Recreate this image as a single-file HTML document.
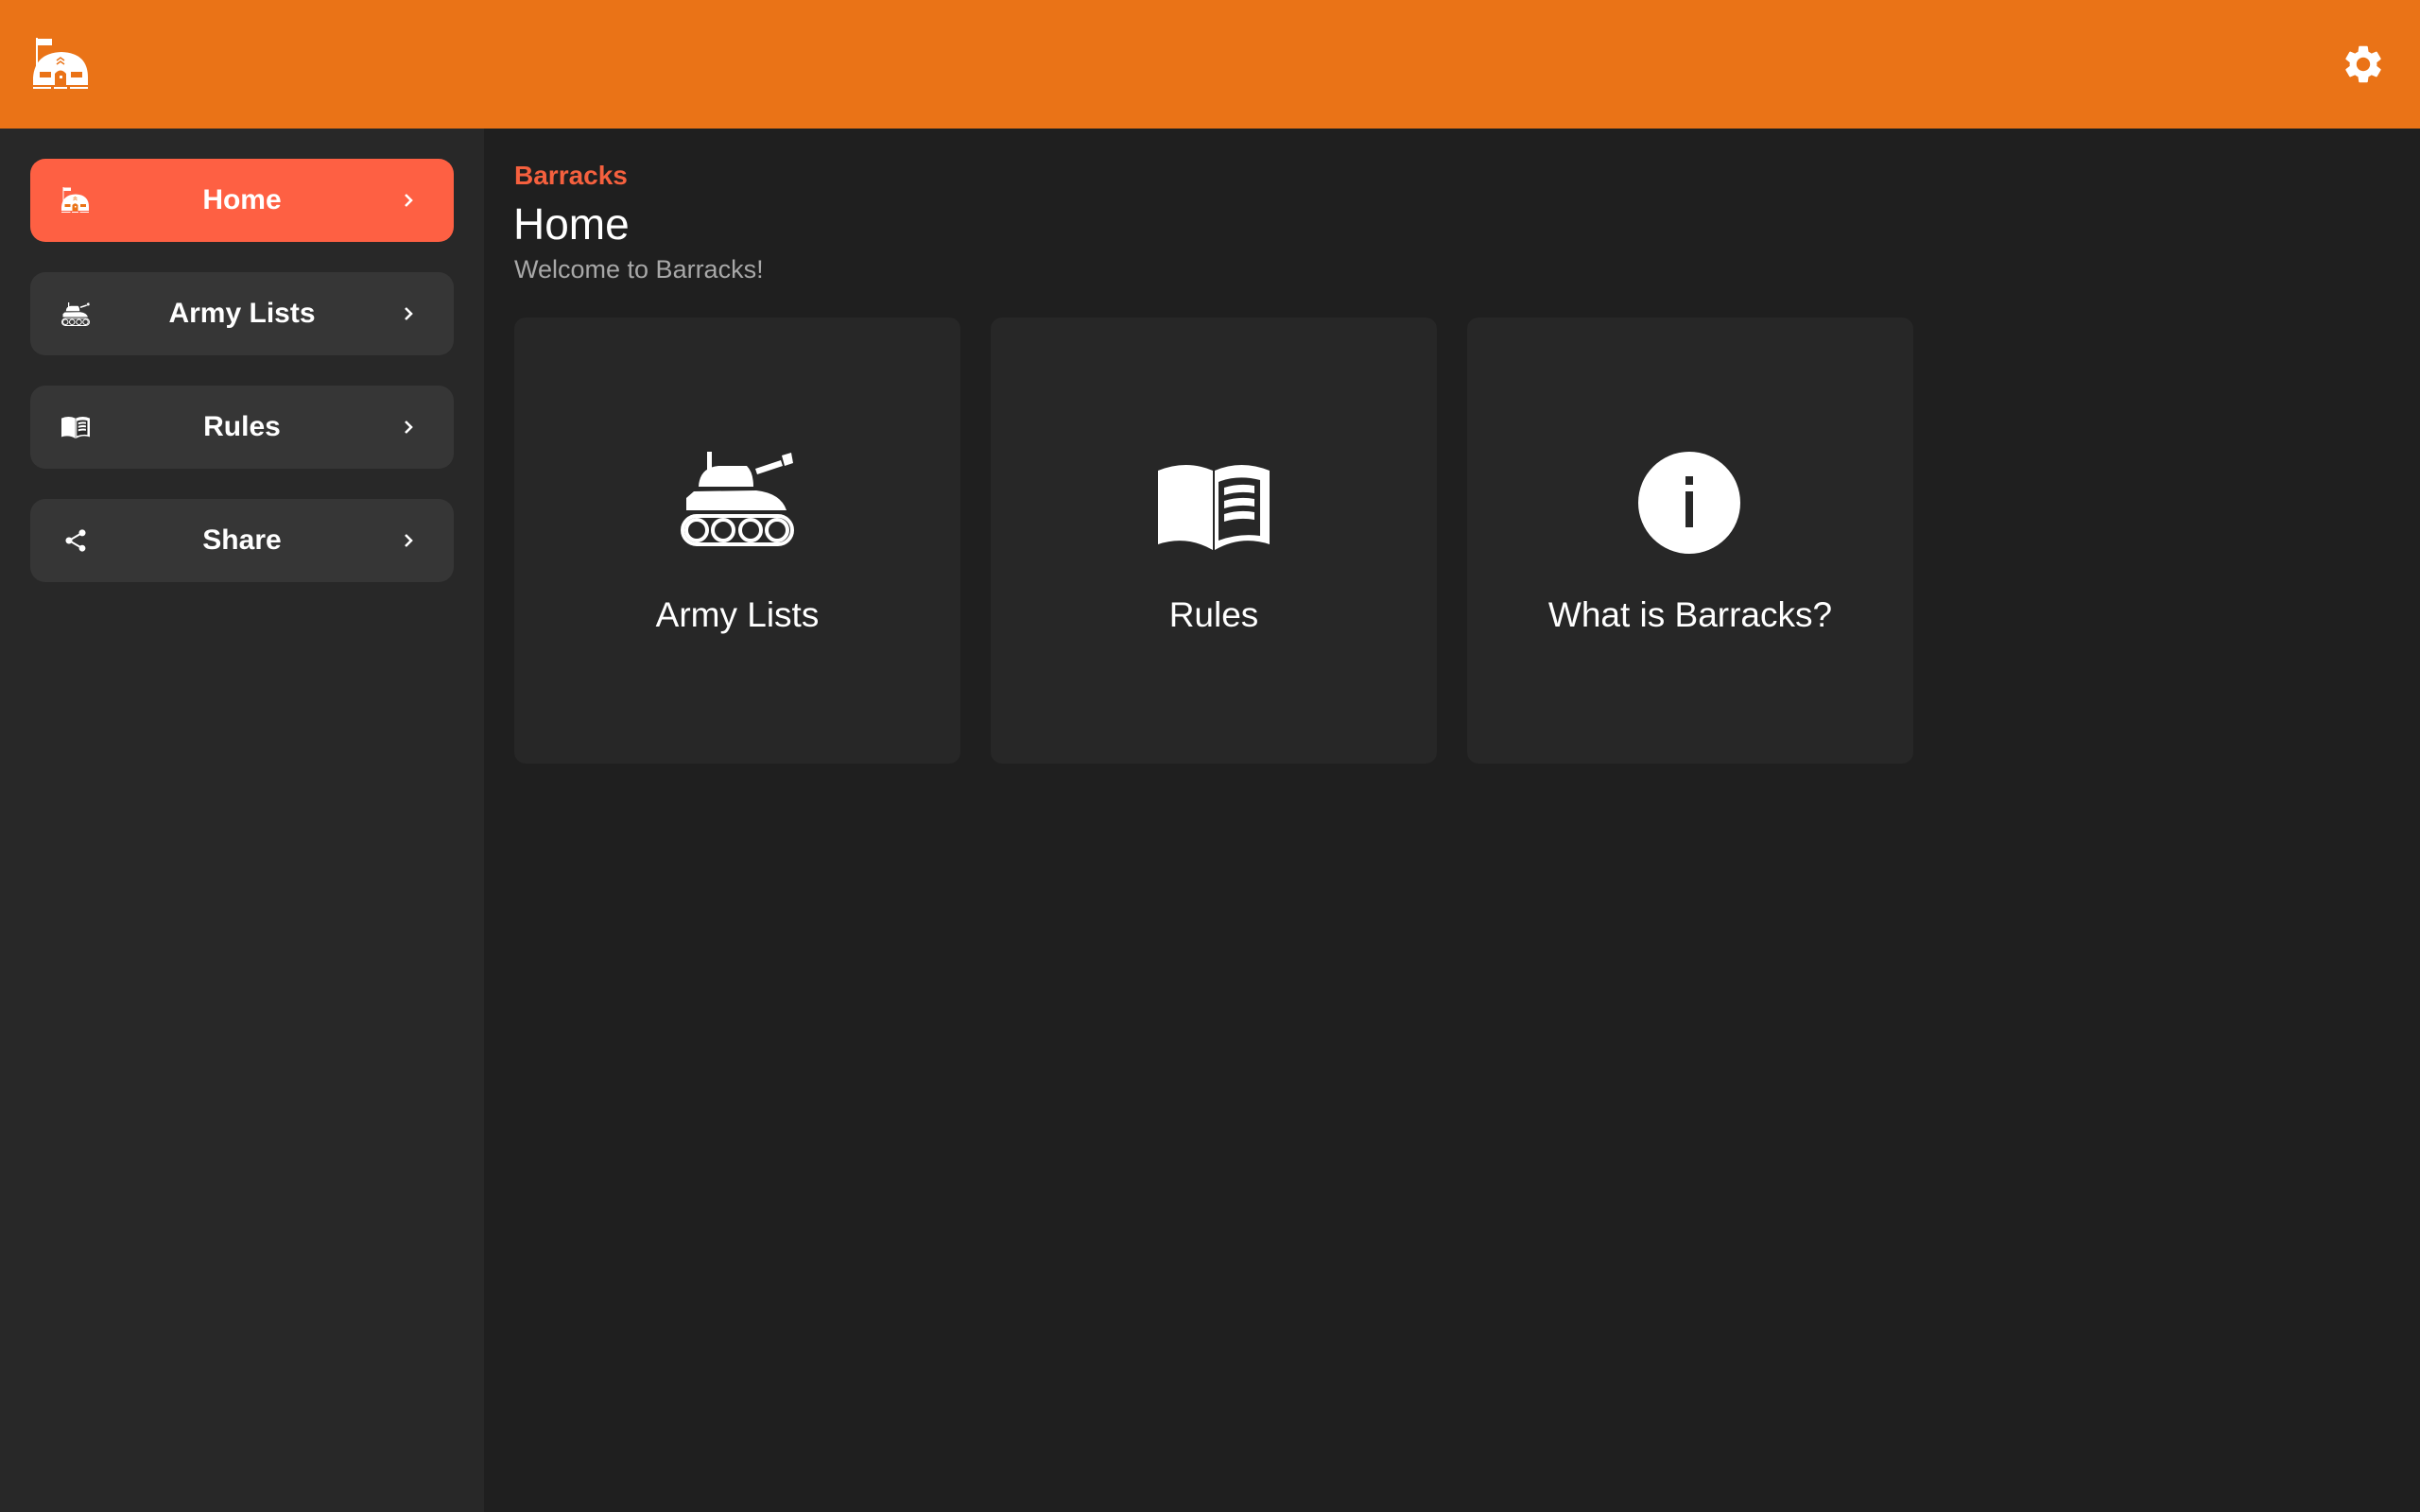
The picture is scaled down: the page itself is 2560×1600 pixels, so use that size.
<!DOCTYPE html>
<html><head><meta charset="utf-8"><style>
*{margin:0;padding:0;box-sizing:border-box}
body{width:2560px;height:1600px;background:#1f1f1f;font-family:"Liberation Sans",sans-serif;position:relative;overflow:hidden;color:#fff}
.hdr{position:absolute;left:0;top:0;width:2560px;height:136px;background:#ea7317}
.side{position:absolute;left:0;top:136px;width:512px;height:1464px;background:#282828}
.btn{position:absolute;left:32px;width:448px;height:88px;border-radius:16px;background:#363636}
.btn.act{background:#fe6043}
.btn .t{position:absolute;left:0;right:0;top:0;line-height:88px;text-align:center;font-weight:bold;font-size:30px}
.btn .ic{position:absolute}
.btn .ch{position:absolute;left:392px;top:35px;width:16px;height:18px}
.card{position:absolute;top:336px;width:472px;height:472px;background:#272727;border-radius:12px}
.lab{position:absolute;top:628px;text-align:center;font-size:37px;width:472px}
</style></head><body>
<svg width="0" height="0" style="position:absolute">
<defs>
<symbol id="tank" viewBox="0 0 120 100">
<rect x="28" y="0" width="5" height="20" fill="#fff"/>
<path d="M19 37 Q20 17 40 15 L70 15 Q77 22 77 37 Z" fill="#fff"/>
<path d="M79 18 L106 9 L108 15 L81 24 Z" fill="#fff"/>
<path d="M107 4 L117 1 L119 12 L110 15 Z" fill="#fff"/>
<path d="M6 49 L14 42 L80 41 Q106 44 112 62 L6 62 Z" fill="#fff"/>
<rect x="2" y="68" width="116" height="30" rx="15" fill="none" stroke="#fff" stroke-width="4"/>
<circle cx="17" cy="83" r="11" fill="none" stroke="#fff" stroke-width="4"/>
<circle cx="45" cy="83" r="11" fill="none" stroke="#fff" stroke-width="4"/>
<circle cx="74" cy="83" r="11" fill="none" stroke="#fff" stroke-width="4"/>
<circle cx="102" cy="83" r="11" fill="none" stroke="#fff" stroke-width="4"/>
</symbol>
<symbol id="book" viewBox="0 0 118 90">
<path d="M0 6 Q30 -6 58 6 L58 90 Q30 74 0 84 Z" fill="#fff"/>
<path d="M60 6 Q88 -6 118 6 L118 84 Q88 74 60 90 Z" fill="#fff"/>
<path d="M64 80 L64 18 Q84 10 108 16 L108 75 Q86 72 64 80 Z" fill="#272727"/>
<path d="M70 24 Q86 19 102 22 L102 30 Q86 27 70 32 Z M70 38 Q86 33 102 36 L102 44 Q86 41 70 46 Z M70 52 Q86 47 102 50 L102 58 Q86 55 70 60 Z" fill="#fff"/>
</symbol>
<symbol id="dome" viewBox="0 0 60 56">
<rect x="3" y="0" width="2" height="30" fill="#fff"/>
<path d="M5 1 L20 1 L20 8 L5 8 Z" fill="#fff"/>
<path d="M0 50 L0 42 Q2 16 30 15 Q58 16 58 42 L58 50 Z" fill="#fff"/>
<rect x="7" y="36" width="12" height="6" fill="#ea7317"/>
<rect x="40" y="36" width="12" height="6" fill="#ea7317"/>
<path d="M23 50 L23 38 Q29 31 35 38 L35 50 Z" fill="#ea7317"/>
<rect x="28" y="40" width="3" height="3" fill="#fff"/>
<path d="M25 24 L29 21 L33 24 M25 28 L29 25 L33 28" stroke="#ea7317" stroke-width="1.5" fill="none"/>
<rect x="0" y="52" width="19" height="2" fill="#fff"/><rect x="22" y="52" width="14" height="2" fill="#fff"/><rect x="39" y="52" width="19" height="2" fill="#fff"/>
</symbol>
<symbol id="chev" viewBox="0 0 16 18"><path d="M5 3 L11 9 L5 15" stroke="#fff" stroke-width="2.6" fill="none"/></symbol>
</defs></svg>

<div class="hdr">
<svg style="position:absolute;left:35px;top:40px" width="60" height="56"><use href="#dome"/></svg>
<svg style="position:absolute;left:2476px;top:44px" width="48" height="48" viewBox="0 0 24 24"><path fill="#fff" d="M19.14 12.94c.04-.3.06-.61.06-.94 0-.32-.02-.64-.07-.94l2.030-1.58a.49.49 0 0 0 .12-.61l-1.92-3.32a.488.488 0 0 0-.59-.22l-2.39.96c-.5-.38-1.03-.7-1.62-.94l-.36-2.54a.484.484 0 0 0-.48-.41h-3.84c-.24 0-.43.17-.47.41l-.36 2.54c-.59.24-1.13.57-1.62.94l-2.39-.96c-.22-.08-.47 0-.59.22L2.74 8.87c-.12.21-.08.47.12.61l2.03 1.58c-.05.3-.09.63-.09.94s.02.64.07.94l-2.03 1.58a.49.49 0 0 0-.12.61l1.92 3.32c.12.22.37.29.59.22l2.390-.96c.5.38 1.03.7 1.62.94l.36 2.54c.05.24.24.41.48.41h3.84c.24 0 .44-.17.47-.41l.36-2.54c.59-.24 1.13-.56 1.62-.94l2.39.96c.22.08.47 0 .59-.22l1.92-3.32c.12-.22.07-.47-.12-.61l-2.01-1.58zM12 15.6c-1.98 0-3.6-1.620-3.6-3.6s1.62-3.6 3.6-3.6 3.6 1.62 3.6 3.6-1.62 3.6-3.6 3.6z"/></svg>
</div>

<div class="side">
<div class="btn act" style="top:32px"><svg class="ic" viewBox="0 0 60 56" style="left:33px;width:30px;height:28px;top:30px"><use href="#dome"/></svg><div class="t">Home</div><svg class="ch"><use href="#chev"/></svg></div>
<div class="btn" style="top:152px"><svg class="ic" viewBox="0 0 120 100" style="left:33px;width:30px;height:25px;top:32px"><use href="#tank"/></svg><div class="t">Army Lists</div><svg class="ch"><use href="#chev"/></svg></div>
<div class="btn" style="top:272px"><svg class="ic" viewBox="0 0 118 90" style="left:33px;width:30px;height:23px;top:33px"><use href="#book"/></svg><div class="t">Rules</div><svg class="ch"><use href="#chev"/></svg></div>
<div class="btn" style="top:392px"><svg class="ic" viewBox="0 0 24 24" style="left:34px;width:28px;height:28px;top:30px"><path fill="#fff" d="M18 16.08c-.76 0-1.44.3-1.96.77L8.91 12.7c.05-.23.09-.46.09-.7s-.04-.47-.09-.7l7.05-4.11c.54.5 1.25.81 2.04.81 1.66 0 3-1.34 3-3s-1.34-3-3-3-3 1.34-3 3c0 .24.04.47.09.7L8.04 9.81C7.5 9.310 6.79 9 6 9c-1.66 0-3 1.34-3 3s1.34 3 3 3c.79 0 1.5-.31 2.04-.81l7.12 4.16c-.05.21-.08.43-.08.65 0 1.61 1.31 2.92 2.92 2.92s2.92-1.31 2.92-2.92-1.31-2.92-2.92-2.92z"/></svg><div class="t">Share</div><svg class="ch"><use href="#chev"/></svg></div>
</div>

<div style="position:absolute;left:544px;top:170px;font-size:28px;font-weight:bold;color:#f5603e">Barracks</div>
<div style="position:absolute;left:543px;top:210px;font-size:46px">Home</div>
<div style="position:absolute;left:544px;top:270px;font-size:27px;color:#a8a8a8">Welcome to Barracks!</div>

<div class="card" style="left:544px"></div>
<div class="card" style="left:1048px"></div>
<div class="card" style="left:1552px"></div>
<svg style="position:absolute;left:720px;top:478px" width="120" height="100"><use href="#tank"/></svg>
<svg style="position:absolute;left:1225px;top:492px" width="118" height="90"><use href="#book"/></svg>
<svg style="position:absolute;left:1733px;top:478px" width="108" height="108" viewBox="0 0 108 108"><circle cx="54" cy="54" r="54" fill="#fff"/><rect x="50" y="26" width="8" height="9" fill="#272727"/><rect x="50" y="42" width="8" height="38" fill="#272727"/></svg>
<div class="lab" style="left:544px;top:630px">Army Lists</div>
<div class="lab" style="left:1048px;top:630px">Rules</div>
<div class="lab" style="left:1552px;top:630px">What is Barracks?</div>
</body></html>
